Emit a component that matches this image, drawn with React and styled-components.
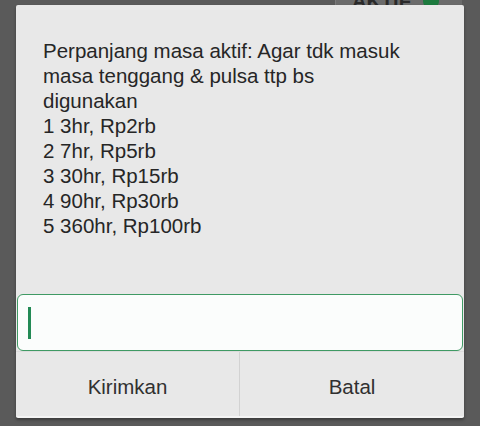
import React from 'react';
import styled, { createGlobalStyle } from 'styled-components';

const GlobalStyle = createGlobalStyle`
  html, body {
    margin: 0;
    padding: 0;
    background: #5a5a5a;
  }
  body {
    font-family: 'Liberation Sans', Arial, sans-serif;
  }
`;

const lines = [
  'Perpanjang masa aktif: Agar tdk masuk',
  'masa tenggang & pulsa ttp bs',
  'digunakan',
  '1 3hr, Rp2rb',
  '2 7hr, Rp5rb',
  '3 30hr, Rp15rb',
  '4 90hr, Rp30rb',
  '5 360hr, Rp100rb',
];

function App() {
  return (
    <Screen>
      <GlobalStyle />
      <StatusStrip>
        <StatusCell>
          <StatusLabel>AKTIF</StatusLabel>
          <StatusDot />
        </StatusCell>
      </StatusStrip>
      <Dialog>
        <Message>
          {lines.map((line) => (
            <div key={line}>{line}</div>
          ))}
        </Message>
        <InputBox>
          <Caret />
        </InputBox>
        <Actions>
          <ActionButton>Kirimkan</ActionButton>
          <ActionButton divider>Batal</ActionButton>
        </Actions>
      </Dialog>
    </Screen>
  );
}

export default App;

const Screen = styled.div`
  width: 480px;
  height: 426px;
  overflow: hidden;
  background: #5a5a5a;
  display: flex;
  flex-direction: column;
`;

const StatusStrip = styled.div`
  height: 5px;
  overflow: hidden;
  display: flex;
  justify-content: flex-end;
  padding-right: 18px;
`;

const StatusCell = styled.div`
  width: 110px;
  height: 5px;
  background: #6b6b6b;
  border-left: 1px solid #7a7a7a;
  display: flex;
  align-items: flex-end;
  gap: 12px;
  padding-left: 16px;
`;

const StatusLabel = styled.span`
  font-size: 20px;
  font-weight: 700;
  line-height: 20px;
  color: #2a2a2a;
  margin-bottom: -6px;
`;

const StatusDot = styled.span`
  width: 16px;
  height: 16px;
  border-radius: 50%;
  background: #1d7a3e;
  margin-bottom: -4px;
`;

const Dialog = styled.div`
  width: 448px;
  margin-left: 16px;
  height: 413px;
  background: #e8e8e8;
  border-radius: 2px;
  display: flex;
  flex-direction: column;
  box-shadow: 0 2px 3px rgba(0, 0, 0, 0.35);
  border-bottom: 2px solid #f4f4f4;
  box-sizing: border-box;
`;

const Message = styled.div`
  padding: 33px 20px 0 27px;
  font-size: 20.5px;
  line-height: 25px;
  color: #262626;
  flex: 1;
`;

const InputBox = styled.div`
  margin: 0 1px;
  height: 57px;
  box-sizing: border-box;
  border: 1.5px solid #3f9a64;
  border-radius: 6px;
  background: #fbfdfc;
  display: flex;
  align-items: center;
  padding-left: 10px;
`;

const Caret = styled.span`
  width: 3px;
  height: 32px;
  background: #238a55;
`;

const Actions = styled.div`
  height: 64px;
  display: grid;
  grid-template-columns: 223px 1fr;
  border-top: 1px solid #dcdcdc;
`;

const ActionButton = styled.div`
  display: flex;
  align-items: center;
  justify-content: center;
  font-size: 20.5px;
  color: #303030;
  border-left: ${(p) => (p.divider ? '1px solid #d2d2d2' : 'none')};
  padding-top: 6px;
`;
